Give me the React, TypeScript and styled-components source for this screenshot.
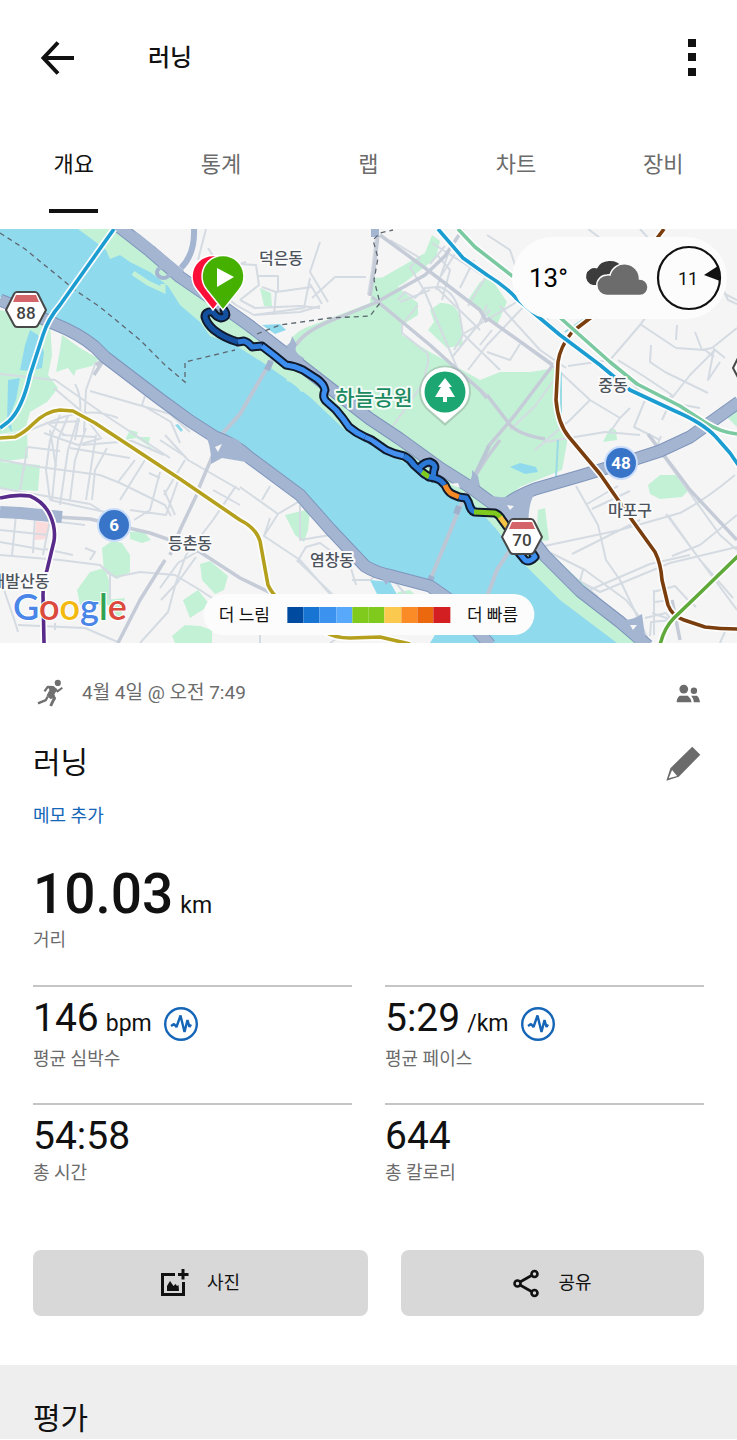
import React from 'react';
import styled, { createGlobalStyle } from 'styled-components';

const INK = '#111111';
const MUTED = '#6b6b6b';
const BLUE = '#1566b7';

const GlobalStyle = createGlobalStyle`
  *, *::before, *::after { box-sizing: border-box; }
  body {
    margin: 0;
    background: #ffffff;
    color: ${INK};
    font-family: Roboto, 'Noto Sans CJK KR', sans-serif;
  }
  button { font: inherit; color: inherit; background: none; border: 0; padding: 0; cursor: pointer; }
  h1, h2, p, dl, dd, dt { margin: 0; font-weight: 400; }
`;

/* ---------- header and tabs ---------- */

const AppBar = styled.header`
  display: flex;
  align-items: center;
  height: 116px;
  padding: 0 40px;
`;

const IconButton = styled.button`
  display: flex;
  align-items: center;
  justify-content: center;
  svg { display: block; }
`;

const BarTitle = styled.h1`
  flex: 1;
  margin-left: 74px;
  font-size: 24px;
  line-height: 36px;
  font-weight: 500;
`;

const Tabs = styled.nav`
  display: grid;
  grid-template-columns: repeat(5, 1fr);
  height: 113px;
  padding-bottom: 16px;
`;

const Tab = styled.button<{ $active?: boolean }>`
  position: relative;
  font-size: 22px;
  line-height: 32px;
  color: ${(p) => (p.$active ? INK : MUTED)};
  &::after {
    content: '';
    display: ${(p) => (p.$active ? 'block' : 'none')};
    position: absolute;
    left: 50%;
    bottom: 0;
    width: 49px;
    height: 4px;
    margin-left: -25px;
    background: ${INK};
  }
`;

/* ---------- map ---------- */

const MapPanel = styled.section`
  position: relative;
  height: 414px;
  overflow: hidden;
  background: #f5f5f5;
`;

const MapCanvas = styled.svg`
  display: block;
  width: 100%;
  height: 100%;
`;

const WeatherPill = styled.div`
  position: absolute;
  top: 8px;
  right: 10px;
  display: flex;
  align-items: center;
  height: 82px;
  padding: 0 5px 0 17px;
  border-radius: 41px;
  background: #fcfcfc;
`;

const Temperature = styled.span`
  width: 55px;
  font-size: 26px;
  line-height: 32px;
  color: #000000;
`;

const Compass = styled.svg`
  margin-left: 8px;
`;

const LegendPill = styled.div`
  position: absolute;
  left: 50%;
  bottom: 8px;
  transform: translateX(-50%);
  display: flex;
  align-items: center;
  gap: 17px;
  height: 41px;
  padding: 0 16px;
  border-radius: 21px;
  background: #fcfcfc;
  font-size: 17px;
  line-height: 28px;
  white-space: nowrap;
`;

const LegendBar = styled.div`
  display: grid;
  grid-template-columns: repeat(10, 1fr);
  width: 163px;
  height: 16px;
`;

const LegendStep = styled.span<{ $color: string }>`
  background: ${(p) => p.$color};
`;

/* ---------- activity details ---------- */

const Details = styled.section`
  padding: 36px 33px 49px;
`;

const MetaRow = styled.div`
  display: flex;
  align-items: center;
  padding: 0 3px 0 4px;
  font-size: 19px;
  line-height: 28px;
  color: ${MUTED};
`;

const MetaText = styled.p`
  flex: 1;
  margin-left: 19px;
`;

const TitleRow = styled.div`
  display: flex;
  align-items: center;
  justify-content: space-between;
  margin-top: 36px;
  padding-right: 3px;
`;

const Heading = styled.h2`
  font-size: 30px;
  line-height: 40px;
`;

const NoteLink = styled.a`
  display: block;
  width: max-content;
  margin-top: 19px;
  font-size: 18px;
  line-height: 28px;
  color: ${BLUE};
  text-decoration: none;
`;

const Distance = styled.dl`
  display: flex;
  flex-direction: column-reverse;
  margin-top: 32px;
`;

const DistanceValue = styled.dd`
  font-size: 55px;
  line-height: 64px;
  font-weight: 500;
`;

const Unit = styled.span`
  margin-left: 7px;
  font-size: 23px;
  line-height: 1;
  font-weight: 400;
`;

const Label = styled.dt`
  font-size: 18px;
  line-height: 28px;
  color: ${MUTED};
`;

const Stats = styled.dl`
  display: grid;
  grid-template-columns: 1fr 1fr;
  gap: 30px 33px;
  margin-top: 31px;
`;

const Stat = styled.div`
  display: flex;
  flex-direction: column-reverse;
  padding-top: 8px;
  border-top: 2px solid #c5c5c5;
`;

const StatValue = styled.dd<{ $withChart?: boolean }>`
  display: flex;
  align-items: center;
  padding-bottom: ${(p) => (p.$withChart ? 4 : 0)}px;
  font-size: 39px;
  line-height: 46px;
`;

const ChartButton = styled(IconButton)`
  margin: 11px 0 0 12px;
  height: 34px;
`;

const Actions = styled.div`
  display: grid;
  grid-template-columns: 335fr 303fr;
  gap: 33px;
  margin-top: 63px;
`;

const ActionButton = styled.button`
  display: flex;
  align-items: center;
  justify-content: center;
  gap: 18px;
  height: 66px;
  border-radius: 8px;
  background: #d8d8d8;
  font-size: 18px;
  line-height: 28px;
`;

const Rating = styled.section`
  padding: 34px 33px 0;
  background: #eeeeee;
`;

/* ---------- icons ---------- */

const BackIcon = () => (
  <svg width="34" height="34" viewBox="0 0 34 34" fill="none" stroke={INK} strokeWidth="4">
    <path d="M34 17H4M18 1.5L3.5 17L18 32.5" />
  </svg>
);

const MoreIcon = () => (
  <svg width="9" height="38" viewBox="0 0 9 38" fill={INK}>
    <path d="M0 0h8v8h-8zM0 14h8v8h-8zM0 29h8v8h-8z" />
  </svg>
);

const RunIcon = () => (
  <svg width="26" height="28" viewBox="109 54 80 86" fill="none" stroke="#707070" strokeLinejoin="round">
    <circle cx="173" cy="66" r="9.5" fill="#707070" stroke="none" />
    <path d="M144 77L161 78L170 86L161 101L164 110L150 114L140 105L149 88Z" fill="#707070" strokeWidth="3" />
    <path d="M160 79L142 78L132 92" strokeWidth="7" />
    <path d="M165 84L172 92L187 81" strokeWidth="6" />
    <path d="M152 102L163 113L158 122L151 137" strokeWidth="9" />
    <path d="M142 108L136 119L112 129" strokeWidth="7" />
  </svg>
);

const PeopleIcon = () => (
  <svg width="25" height="19" viewBox="228 70 74 56" fill={MUTED}>
    <circle cx="251" cy="85" r="13" />
    <circle cx="281" cy="90" r="9.5" />
    <path d="M230 124Q230 112 239 105H263Q272 112 274 124ZM273 105H290Q297 110 299 124H281Q279 112 273 105Z" />
  </svg>
);

const PencilIcon = () => (
  <svg width="35" height="35" viewBox="200 253 104 104" fill={MUTED} fillRule="evenodd">
    <path d="M278 255L302 279L238 344L201 356L213 319ZM218 324L208 349L233 342Z" />
  </svg>
);

const PulseIcon = () => (
  <svg width="34" height="34" viewBox="0 0 34 34" fill="none" stroke={BLUE}>
    <circle cx="17" cy="17" r="15.8" strokeWidth="2.4" />
    <path d="M7 19L10 17L12.500 20L16.500 8.500L20.500 25L23.500 13L25.500 20L27 17.500" strokeWidth="2.400" strokeLinejoin="bevel" />
  </svg>
);

const PhotoIcon = () => (
  <svg width="28" height="28" viewBox="0 0 28 28" fill="none" stroke={INK} strokeWidth="3">
    <path d="M14 5.500H1.500V25.500H22.500V13M22 0V10.500M17 5.500H27.500" />
    <path d="M6 22V17L9 12L12.500 17L14.500 15L16 17L17.500 16L18 22Z" fill={INK} stroke="none" />
  </svg>
);

const ShareIcon = () => (
  <svg width="27" height="29" viewBox="0 0 27 29" fill="none" stroke={INK} strokeWidth="2.6">
    <path d="M7 13L18.500 6.500M7 16L18.500 22.500" />
    <circle cx="4.500" cy="14.500" r="3" />
    <circle cx="21.500" cy="5" r="3" />
    <circle cx="21.500" cy="24" r="3" />
  </svg>
);

const CloudIcon = () => (
  <svg width="64" height="36" viewBox="0 0 64 36">
    <path d="M9 25A8.500 8.500 0 1 1 13 8.500A14 12 0 0 1 38 7L34 20L12 25Z" fill="#3c3c3c" />
    <path
      d="M23 35.500A10 10 0 0 1 23 15Q25 14.500 26 15A15 15 0 0 1 55.500 19A8 8 0 0 1 56 35.500Z"
      fill="#6c6c6c"
      stroke="#fcfcfc"
      strokeWidth="1.500"
    />
  </svg>
);

/* ---------- map drawing ---------- */

type ShieldProps = { x: number; y: number; label: string };

const ExpresswayShield = ({ x, y, label }: ShieldProps) => (
  <g transform={`translate(${x} ${y})`}>
    <path d="M-20 0L-12 -16Q-11 -18 -9 -18H9Q11 -18 12 -16L20 0L12 15Q11 17 9 17H-9Q-11 17 -12 15Z" fill="#fff" stroke="#484848" strokeWidth="2" />
    <path d="M-13 -8L-10 -15H10L13 -8Z" fill="#d36467" />
    <text y="9" textAnchor="middle" fontSize="17" fontWeight="500" fill="#444">{label}</text>
  </g>
);

const RouteBadge = ({ x, y, label }: ShieldProps) => (
  <g transform={`translate(${x} ${y})`}>
    <circle r="16" fill="#3875c8" stroke="#c9ddfb" strokeWidth="2" />
    <text y="6" textAnchor="middle" fontSize="17" fontWeight="700" fill="#fff">{label}</text>
  </g>
);

const Place = ({ x, y, label }: ShieldProps) => (
  <text x={x} y={y} textAnchor="middle" fontSize="16" fontWeight="500" fill="#4c535d" stroke="#fafafa" strokeWidth="4" strokeLinejoin="round" paintOrder="stroke">
    {label}
  </text>
);

const subwayLines: Array<[string, string]> = [
  ['#b4a01d', 'M0 438L15 437Q24 433 33 424Q46 411 60 410L73 411L95 423L180 479L240 520Q256 528 260 541L268 585Q272 594 280 600L325 632Q335 638 350 638L380 637L410 644'],
  ['#582b8b', 'M0 498Q15 494 30 496Q44 502 50 515Q56 528 54 541L47 570Q43 582 43 595L44 643'],
  ['#7a3d0e', 'M664 229L655 241L606 306L572 332Q560 347 558 362L556 400Q558 424 569 437L600 474L632 520L655 552Q661 564 662 580L668 605Q672 616 684 620L705 627Q720 629 737 629'],
  ['#7bc9a0', 'M458 229L475 247L520 282L610 362L637 384L680 406L706 423Q720 432 737 434'],
  ['#1b9dd2', 'M114 229L60 305Q48 319 43 335L30 375Q22 410 8 422L0 428'],
  ['#1b9dd2', 'M438 229L463 258L487 275Q505 286 516 298L560 335L600 365L630 390L675 411Q703 423 716 437L730 453L739 466'],
  ['#5ea93a', 'M739 555L700 593L674 618Q664 628 660 645'],
];

const minorRoads = [
  'M206 229L198 260', 'M208 248L222 270L246 262', 'M240 264L256 265L259 285L240 300', 'M258 276H278V292', 'M320 242L310 272L328 302M310 278L304 308L254 315L236 305L220 292',
  'M262 287L276 292L274 315M276 292L312 287M310 284L322 304M312 298L335 277H366', 'M254 315L300 312L320 306',
  'M240 300L255 308L300 306L320 308', 'M430 290L400 302M398 300L405 292L415 298L425 288L440 287Q454 292 459 310L463 335L454 350',
  'M437 288L480 330M442 300L450 270L438 256M450 248L436 290M432 243L487 278M445 246L430 264M455 254L441 276M474 260L460 288M487 275L468 306',
  'M463 334L490 318L520 300M464 335L500 370M480 345L492 330M487 305L478 327M468 370L487 345L530 300M453 356L490 310', 'M418 305L402 325L402 333L427 353Q430 360 426 370L424 382L393 426',
  'M500 306L540 350L566 368M487 352L510 360L520 344M544 306L550 327L570 344M490 320L560 372',
  'M568 366L610 360L640 325L645 318M610 360L640 392M640 325L650 312M640 324L676 348L705 350L714 357M651 345L650 362L665 372L708 393M618 360L645 377L672 395L666 402L700 408',
  'M677 325L676 340M695 332L702 350L712 348M715 350L690 375L672 398L662 420M712 348L737 328M725 358L714 349L708 380L720 362M719 291L737 300M718 278L728 300L737 304',
  'M560 372L590 400L570 420L535 450M560 372L535 406L510 430M590 400L620 418L630 408M620 418L610 432M645 400L634 427L660 440',
  'M487 235L510 250L516 268M588 229L600 238M640 229L650 240', 'M545 442L605 432L640 435', 'M576 486L598 525L606 560L620 580L638 618L650 643',
  'M540 547L620 530L680 513Q705 500 735 475M541 548L585 570L626 600L642 620M587 504L618 486M592 509L630 491M572 554L640 520M583 570L580 581L598 597',
  'M540 560L600 592L670 563L737 547M666 514L737 610M672 556L700 545L737 515M668 515L700 560L733 598M585 592L650 564L690 555', 'M653 592L675 586L688 600L696 607M654 590V635M655 602L670 600M652 613L672 620L651 622L650 636M645 618L666 613L673 622M720 643L728 625',
  'M648 435L720 535L737 550M661 436L655 452',
  'M0 374L55 380L105 415L170 458M54 388L80 410L100 437M90 391L170 414L190 432M145 396L142 405L171 422L180 443M96 362L86 390L84 432M75 384Q84 400 78 424L75 440M118 418Q90 406 55 420L30 430',
  'M46 422L65 435M60 415L50 440L46 470L50 500M68 416L58 440L52 500M78 418L68 450L60 505M86 428L75 460L70 500M96 435L86 500M44 433L78 445L102 438M48 423L80 421',
  'M0 460L40 467L100 475L120 483L165 505L171 516M0 488L90 504L100 510M28 447L60 451M24 466L20 490M27 447L24 470M70 448L130 458M56 467L50 430M82 445L132 441L164 455',
  'M107 448L95 470L92 500M135 460L118 482M145 460L120 500M160 472L150 510L134 520M178 481L166 515L130 510M149 473L160 478M62 435L95 437M50 500L105 512',
  'M0 515L85 525M0 530L48 535M0 542L45 550M16 515L12 555M35 515L33 553M50 520L43 555M0 555L60 560L100 565L115 577L140 572L175 575L200 590L215 600M100 565L110 575L110 600M85 548L95 552L90 560M45 549L73 555M0 578L15 622L18 632M18 625L85 628L120 643M55 623V630',
  'M165 435L188 460L240 490M160 440L186 457M236 486L213 520L186 555L175 585L161 600M196 557L175 586L168 612L140 643M200 550L178 563L160 588M213 490L240 505M185 460L164 495M164 490L175 515',
  'M240 487L278 514L298 502M278 514L264 536L300 560L330 594M264 536L270 518M270 486L262 500M297 562L306 547L320 543L350 565L356 585M300 505L300 540L330 535M297 560L333 595M352 580L370 580L378 574M392 578L405 594M260 600V643M345 633L330 643',
  'M390 240L420 258L410 267L424 290L458 370L487 395M377 229L372 270L368 295',
];

const mainRoads = [
  'M296 345Q305 330 340 317L375 303L425 275L445 256L463 229', 'M380 235L425 268L480 310L487 322M372 297L430 345L480 390L487 398M370 296L374 270L378 235',
  'M487 318L553 365M553 365L515 415L487 448', 'M487 395L510 425Q520 435 545 439', 'M56 517L90 519L150 533L170 540L200 552L240 578L275 595',
  'M165 560L140 600L118 643M170 555L180 530L198 492M215 450L198 490', 'M672 600L680 640M648 434L690 490L737 540',
  'M487 560L480 590', 'M96 365L105 358L94 375', 'M475 476L488 456L500 440',
];

const highways = [
  'M0 300L20 308L55 324Q80 334 95 347L105 357L160 399L190 421L215 437Q235 444 250 458L300 495L330 529L365 566Q376 573 392 576L430 586L450 600L490 645',
  'M118 226L150 251L180 277L215 301L250 326L290 357L330 388L370 419L400 439L440 468L470 487L500 509L525 530L545 556L580 591L620 622L648 646',
  'M502 508Q512 498 535 489L580 476L620 464L660 451L690 437L739 402',
];

const parks = [
  'M0 310L50 322L52 355L48 375L58 388L47 402L30 412L25 430L0 434Z', 'M78 229L93 240L106 250L110 259L120 255L130 262L150 272L168 286L180 305L200 322L210 336L235 345L262 362L285 378L310 397L345 430L390 455L440 480L470 500L497 530L520 560L560 600L617 643H645L500 505L215 300L118 229Z',
  'M62 335L80 348L99 359L92 366L76 370L74 376L68 368L56 372L60 350Z', 'M290 341Q293 334 305 328L370 303L374 278L390 277L400 289L418 303L418 315L402 325L402 335L430 352L480 380L500 372H530L556 368V405L568 437L562 470L520 487L500 504L380 424L325 382L293 354Z',
  'M425 253L432 235L440 241L436 258L404 283L370 302L378 280Z', 'M430 310L440 303Q457 302 460 318L463 345L447 348L428 330L434 322Z', 'M468 300L480 282L490 277L507 302L497 325Z', 'M260 288L271 293L272 307L264 306Z',
  'M0 435L27 430L28 458L0 462ZM0 462L40 465L38 491L0 489Z', 'M130 532L143 531L151 540L142 543L130 539Z', 'M102 548L112 541L122 543L130 555V572L117 579L104 572Z', 'M77 590L90 572L104 568L109 580V605H80Z', 'M200 564L210 561L228 576L224 590L215 594L202 580Z',
  'M183 600L198 590L210 605L190 618ZM172 636L185 625L200 626L212 630V643H175Z', 'M135 437H150L148 447L158 452ZM130 430L138 432L136 438L125 440Z',
  'M285 515L310 509L308 530L304 542L295 535Z', 'M648 485L660 475H678L690 489L682 497L660 499L650 494Z', 'M538 510L545 508L549 540L536 542Z',
  'M610 428L616 430L617 440L603 442ZM724 414L737 410V427Z', 'M410 570L418 567L420 575L412 578ZM398 592L410 590L420 600H395Z', 'M105 600L125 598L120 620Z',
];

const speeds: Array<[string, string]> = [
  ['#1450a0', 'M224 310Q229 317 221 318Q216 317 213 312Q205 311 205 317Q207 324 214 330Q224 338 238 342'],
  ['#2b78d6', 'M238 342L244 341Q248 342 252 347L262 346'],
  ['#3c8ff0', 'M262 346L275 356L286 365Q295 366 303 370L317 379Q324 384 325 390Q322 397 326 401L336 410Q343 418 349 427Q356 433 365 437'],
  ['#458ff0', 'M365 437Q371 439 376 443L386 450Q394 454 404 456'],
  ['#2b78d6', 'M404 456Q410 459 414 465L424 474L430 477M420 467Q425 462 430 462Q437 465 434 470L433 478'],
  ['#7fca1d', 'M422 472L429 477'],
  ['#2b78d6', 'M429 477Q437 478 441 481L445 485'],
  ['#f58926', 'M445 485Q448 492 452 494L459 497'],
  ['#2b78d6', 'M459 497L466 498Q469 502 470 507Q472 512 476 512'],
  ['#7fca1d', 'M474 512L495 513Q498 514 501 518'],
  ['#f5c445', 'M500 517L508 528'],
  ['#3c8ff0', 'M508 528L515 548L525 560Q529 563 535 557L531 551'],
];

const routeOutline = speeds.map(([, d]) => d).join('');

const GoogleMark = () => (
  <text x="13" y="620" fontFamily="Lato, sans-serif" fontSize="36" fontWeight="600" stroke="#fff" strokeWidth="2" paintOrder="stroke">
    <tspan fill="#4a86e8">G</tspan>
    <tspan fill="#db4a3c">o</tspan>
    <tspan fill="#f2b90f">o</tspan>
    <tspan fill="#4a86e8">g</tspan>
    <tspan fill="#2fa254">l</tspan>
    <tspan fill="#db4a3c">e</tspan>
  </text>
);

const RouteMap = () => (
  <MapCanvas viewBox="0 229 737 414" preserveAspectRatio="xMidYMid slice" role="img" aria-label="러닝 경로 지도">
    <rect y="229" width="737" height="414" fill="#f5f5f5" />
    <g fill="#c3f1d5">
      {parks.slice(0, 1).map((d) => <path key={d} d={d} />)}
      {parks.slice(2).map((d) => <path key={d} d={d} />)}
    </g>
    <path d="M36 521L49 523L47 539L35 540Z" fill="#fbdcdc" />
    <g fill="none" stroke="#d5dbe2" strokeWidth="2" strokeLinejoin="round">
      {minorRoads.map((d) => <path key={d} d={d} />)}
    </g>
    <g fill="none" stroke="#c5ccd8" strokeWidth="3.500" strokeLinejoin="round">
      {mainRoads.map((d) => <path key={d} d={d} />)}
    </g>
    <path d="M0 229H118L215 300L500 505L645 643H430L450 610L430 588L376 570L330 527L300 492L250 452L215 434L190 420L105 354L50 322L0 297Z" fill="#90daee" />
    <path d={parks[1]} fill="#c3f1d5" />
    <g fill="#90daee">
      <path d="M30 330L38 335L44 352L42 368L30 371L20 370L25 345ZM8 380L20 378L16 400L10 415L12 432L7 425Z" />
      <path d="M510 467L520 463L536 467L538 472L525 474ZM262 325L280 324L286 330L275 334Z" />
      <path d="M175 425L178 424L183 430L181 432ZM370 580L390 582L400 600H380Z" />
    </g>
    <path d="M133 273L148 283L163 290L163 284" fill="none" stroke="#c3f1d5" strokeWidth="5" />
    <path d="M287 379L295 381L303 391" fill="none" stroke="#c3f1d5" strokeWidth="4" />
    <path d="M561 372V425M565 332L590 315M558 440L556 478" fill="none" stroke="#9adbe5" strokeWidth="2" />
    <g fill="none" stroke="#bcc7d6" strokeWidth="4">
      <path d="M277 352L268 366L240 414L213 444M489 446L463 500L426 590M515 542L497 570L480 615" />
      <path d="M271 361L267 370M459 506L456 514M432 576L427 588" stroke="#9fb1cd" strokeWidth="6" />
    </g>
    <g fill="none" stroke="#7f95bb" strokeWidth="13" strokeLinejoin="round">
      {highways.map((d) => <path key={d} d={d} />)}
    </g>
    <g fill="#a4b5d2">
      <path d="M202 428Q212 444 211 464L222 458L246 462L252 455L238 440Z" />
      <path d="M484 494Q506 502 526 490L540 486Q526 500 529 531L512 522Z" />
      <path d="M468 484Q473 478 472 470L478 476L480 486Z" />
      <path d="M286 346Q292 342 292 336L297 345Q292 352 304 358L300 364Z" />
      <path d="M612 618Q626 624 642 614L646 643H636Z" />
      <path d="M376 568L386 585L392 578L408 578L424 590L432 588Z" />
    </g>
    <g fill="none" stroke="#a4b5d2" strokeWidth="11" strokeLinejoin="round">
      {highways.map((d) => <path key={d} d={d} />)}
      <path d="M0 512L20 513L62 517" strokeWidth="12" />
      <path d="M194 229Q195 254 181 268" strokeWidth="6" />
      <path d="M157 272A6 5 0 1 0 170 273A6 5 0 1 0 157 272" strokeWidth="4" />
      <path d="M375 229V237" strokeWidth="8" />
      <path d="M127 231L138 235L183 272" strokeWidth="3" />
    </g>
    <g fill="#f5f5f5">
      <path d="M215 447L222 444L218 452ZM449 484L458 483L460 488ZM507 505L514 506L510 510ZM630 625L637 625L633 630Z" />
    </g>
    <path d="M0 233L25 249L75 290L100 307L140 340L165 365L185 382V362L235 350M257 334L280 325L330 318L370 316L380 303L374 280L378 258L373 240L380 233L393 230" fill="none" stroke="#5e6770" strokeWidth="1.300" strokeDasharray="5 4" />
    {subwayLines.map(([color, d]) => (
      <g key={d} fill="none" strokeLinejoin="round">
        <path d={d} stroke="#fdfdfd" strokeWidth="7" />
        <path d={d} stroke={color} strokeWidth="3.600" />
      </g>
    ))}
    <Place x={281} y={264} label="덕은동" />
    <Place x={613} y={391} label="중동" />
    <Place x={630} y={516} label="마포구" />
    <Place x={190} y={549} label="등촌동" />
    <Place x={332} y={566} label="염창동" />
    <Place x={20} y={587} label="내발산동" />
    <text x="374" y="405" textAnchor="middle" fontSize="21" fontWeight="500" fill="#1a8a61" stroke="#f4fbf6" strokeWidth="4" strokeLinejoin="round" paintOrder="stroke">하늘공원</text>
    <g>
      <path d="M445 426L429 412A26 26 0 1 1 461 412Z" fill="#7c8b84" opacity=".35" />
      <path d="M445 423L430 410A24 24 0 1 1 460 410Z" fill="#fff" />
      <circle cx="445" cy="392" r="20.500" fill="#1ba672" />
      <path d="M445 378L452 387H449L455 397H447V402H443V397H435L441 387H438Z" fill="#fff" />
    </g>
    <RouteBadge x={114} y={525} label="6" />
    <RouteBadge x={621} y={463} label="48" />
    <ExpresswayShield x={26} y={310} label="88" />
    <ExpresswayShield x={753} y={368} label="" />
    <g fill="none" strokeLinejoin="round" strokeLinecap="round">
      <path d={routeOutline} stroke="#101a2c" strokeWidth="9" />
      {speeds.map(([color, d]) => (
        <path key={d} d={d} stroke={color} strokeWidth="5" strokeLinecap="butt" />
      ))}
    </g>
    <ExpresswayShield x={522} y={537} label="70" />
    <g stroke="#fff" strokeWidth="1.500">
      <path d="M213 310L197 290A21 21 0 1 1 229 290Z" fill="#fb0f38" />
      <path d="M223 310L207 290A21 21 0 1 1 239 290Z" fill="#46b000" />
      <path d="M217 268V287L234 277Z" fill="#fff" stroke="none" />
    </g>
    <GoogleMark />
  </MapCanvas>
);

const legendColors = ['#004a9f', '#1874d2', '#3c92ef', '#58a9fb', '#7fca1d', '#7fca1d', '#fbc94d', '#fa8b26', '#ec680f', '#d31f22'];

const tabs = ['개요', '통계', '랩', '차트', '장비'];

type StatItem = { value: string; unit?: string; label: string };

const stats: StatItem[] = [
  { value: '146', unit: 'bpm', label: '평균 심박수' },
  { value: '5:29', unit: '/km', label: '평균 페이스' },
  { value: '54:58', label: '총 시간' },
  { value: '644', label: '총 칼로리' },
];

export default function App() {
  return (
    <>
      <GlobalStyle />
      <AppBar>
        <IconButton aria-label="뒤로"><BackIcon /></IconButton>
        <BarTitle>러닝</BarTitle>
        <IconButton aria-label="더보기"><MoreIcon /></IconButton>
      </AppBar>
      <Tabs>
        {tabs.map((tab, i) => <Tab key={tab} $active={i === 0}>{tab}</Tab>)}
      </Tabs>
      <main>
        <MapPanel>
          <RouteMap />
          <WeatherPill>
            <Temperature>13°</Temperature>
            <CloudIcon />
            <Compass width="66" height="66" viewBox="0 0 66 66">
              <circle cx="33" cy="33" r="31" fill="none" stroke={INK} strokeWidth="2.200" />
              <text x="32" y="40" textAnchor="middle" fontSize="18" fill={INK}>11</text>
              <path d="M48 30L62 21Q65 28 64 36Z" fill={INK} />
            </Compass>
          </WeatherPill>
          <LegendPill>
            <span>더 느림</span>
            <LegendBar>
              {legendColors.map((color, i) => <LegendStep key={i} $color={color} />)}
            </LegendBar>
            <span>더 빠름</span>
          </LegendPill>
        </MapPanel>
        <Details>
          <MetaRow>
            <RunIcon />
            <MetaText>4월 4일 @ 오전 7:49</MetaText>
            <PeopleIcon />
          </MetaRow>
          <TitleRow>
            <Heading>러닝</Heading>
            <IconButton aria-label="이름 편집"><PencilIcon /></IconButton>
          </TitleRow>
          <NoteLink href="#note">메모 추가</NoteLink>
          <Distance>
            <Label>거리</Label>
            <DistanceValue>10.03<Unit>km</Unit></DistanceValue>
          </Distance>
          <Stats>
            {stats.map((s) => (
              <Stat key={s.label}>
                <Label>{s.label}</Label>
                <StatValue $withChart={!!s.unit}>
                  <span>{s.value}{s.unit && <Unit>{s.unit}</Unit>}</span>
                  {s.unit && <ChartButton aria-label={`${s.label} 차트`}><PulseIcon /></ChartButton>}
                </StatValue>
              </Stat>
            ))}
          </Stats>
          <Actions>
            <ActionButton><PhotoIcon />사진</ActionButton>
            <ActionButton><ShareIcon />공유</ActionButton>
          </Actions>
        </Details>
        <Rating>
          <Heading>평가</Heading>
        </Rating>
      </main>
    </>
  );
}
